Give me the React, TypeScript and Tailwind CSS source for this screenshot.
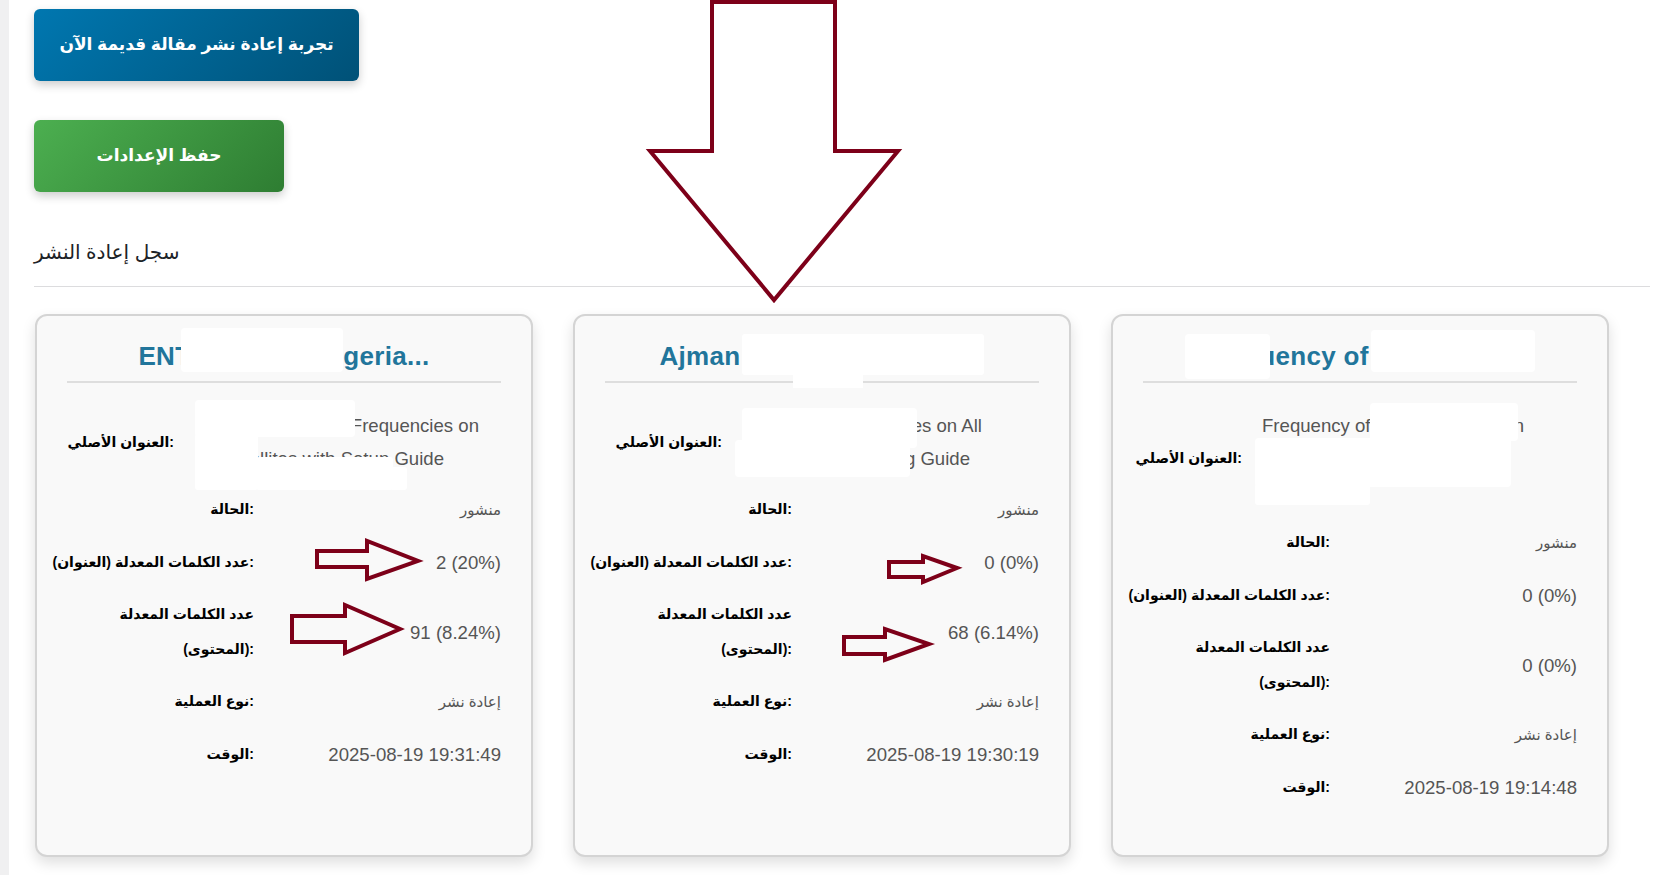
import React from "react";

type TitleLine = { box: string; justify: string; parts: string[] };

type CardData = {
  title: React.ReactNode;
  labelBox: string;
  lines: TitleLine[];
  values: string[];
};

const cards: CardData[] = [
  {
    title: (
      <>
        <span>ENT</span>
        <span className="relative -top-[6px] -ml-[10px] block h-[44px] w-[162px] shrink-0 rounded-[4px] bg-white" />
        <span>geria...</span>
      </>
    ),
    labelBox: "w-[107px]",
    lines: [
      { box: "w-[285px]", justify: "justify-end", parts: ["ENTV Algeria Frequencies on"] },
      { box: "w-[250px]", justify: "justify-end", parts: ["All Satellites with Setup Guide"] },
    ],
    values: ["منشور", "2 (20%)", "91 (8.24%)", "إعادة نشر", "2025-08-19 19:31:49"],
  },
  {
    title: (
      <>
        <span>Ajman</span>
        <span className="relative -top-[2px] ml-[2px] block h-[41px] w-[242px] shrink-0 rounded-[3px] bg-white">
          <span className="absolute left-[51px] top-[38px] block h-[16px] w-[70px] bg-white" />
        </span>
      </>
    ),
    labelBox: "w-[117px]",
    lines: [
      { box: "w-[240px]", justify: "justify-end", parts: ["Channel Frequencies on All"] },
      { box: "w-[228px]", justify: "justify-end", parts: ["Satellites with Tuning Guide"] },
    ],
    values: ["منشور", "0 (0%)", "68 (6.14%)", "إعادة نشر", "2025-08-19 19:30:19"],
  },
  {
    title: (
      <>
        <span className="relative z-10 -mr-[11px] block h-[45px] w-[85px] shrink-0 rounded-[4px] bg-white" />
        <span>uency of</span>
        <span className="relative -top-[5px] ml-[2px] block h-[42px] w-[164px] shrink-0 rounded-[4px] bg-white" />
      </>
    ),
    labelBox: "w-[99px]",
    lines: [
      { box: "w-[262px]", justify: "justify-between", parts: ["Frequency of", "n"] },
      { box: "w-[250px]", justify: "justify-start", parts: ["\u00a0"] },
      { box: "w-[250px]", justify: "justify-start", parts: ["\u00a0"] },
    ],
    values: ["منشور", "0 (0%)", "0 (0%)", "إعادة نشر", "2025-08-19 19:14:48"],
  },
];

const labels = ["الحالة:", "عدد الكلمات المعدلة (العنوان):", "CONTENT", "نوع العملية:", "الوقت:"];

function Card({ d }: { d: CardData }) {
  return (
    <div className="flex w-[498px] shrink-0 flex-col rounded-[12px] border-2 border-[#d4d4d4] bg-[#f9f9f9] px-[30px] pb-[41px] pt-[20px] shadow-[0_6px_14px_rgba(0,0,0,0.13)]">
      <div className="flex h-[47px] items-center justify-center border-b-2 border-[#dedede] pb-[5px] text-[26px] font-bold leading-[40px] tracking-[0.3px] text-[#21759b]">
        {d.title}
      </div>
      <div className="mt-[18px] flex flex-col">
        <div className="flex items-center py-[8px]">
          <div className={"flex shrink-0 justify-end whitespace-nowrap text-[14px] font-bold leading-[35px] text-black " + d.labelBox}>
            <span className="shrink-0">العنوان الأصلي:</span>
          </div>
          <div className="ml-[20px] flex flex-col text-[18.6px] leading-[33px] text-[#555]">
            {d.lines.map((l, i) => (
              <div key={i} className={"flex h-[33px] overflow-hidden whitespace-nowrap " + l.box + " " + l.justify}>
                {l.parts.map((p, j) => (
                  <span key={j} className="shrink-0">
                    {p}
                  </span>
                ))}
              </div>
            ))}
          </div>
        </div>
        {labels.map((lab, i) => {
          const v = d.values[i];
          const arabic = i === 0 || i === 3;
          return (
            <div key={i} className="flex min-h-[53px] items-center py-[8px]">
              <div className="flex w-[187px] shrink-0 flex-col items-end whitespace-nowrap text-[14px] font-bold leading-[35px] text-black">
                {lab === "CONTENT" ? (
                  <>
                    <span className="shrink-0">عدد الكلمات المعدلة</span>
                    <span className="shrink-0">(المحتوى):</span>
                  </>
                ) : (
                  <span className="shrink-0">{lab}</span>
                )}
              </div>
              <div
                className={
                  "flex-1 whitespace-nowrap text-right leading-[37px] " +
                  (arabic ? "text-[15px] text-[#555]" : "text-[18.6px] text-[#555]")
                }
              >
                {v}
              </div>
            </div>
          );
        })}
      </div>
    </div>
  );
}

const ARROW = "#7d0019";

export default function App() {
  return (
    <div className="relative flex min-h-screen w-[1662px] overflow-hidden bg-white [font-family:'Liberation_Sans','DejaVu_Sans',sans-serif]">
      <div className="w-[9px] shrink-0 bg-[#f0f0f1]" />
      <div className="flex-1 pl-[25px] pt-[9px]">
        <button className="flex h-[72px] w-[325px] items-center justify-center rounded-[6px] bg-[linear-gradient(135deg,#0077b0,#005177)] text-[17px] font-bold text-white shadow-[0_4px_10px_rgba(0,0,0,0.2)]">
          تجربة إعادة نشر مقالة قديمة الآن
        </button>
        <button className="mt-[39px] flex h-[72px] w-[250px] items-center justify-center rounded-[6px] bg-[linear-gradient(135deg,#4caf50,#2e7d32)] text-[17px] font-bold text-white shadow-[0_4px_10px_rgba(0,0,0,0.2)]">
          حفظ الإعدادات
        </button>
        <h2 className="mt-[45px] text-[20px] leading-[30px] text-[#1d2327]">سجل إعادة النشر</h2>
        <div className="mr-[12px] mt-[19px] h-px bg-[#dcdcde]" />
        <div className="mt-[27px] flex gap-[40px] pb-[30px] pl-[1px]">
          {cards.map((c, i) => (
            <Card key={i} d={c} />
          ))}
        </div>
      </div>

      <svg className="pointer-events-none absolute left-0 top-0" width="1662" height="875" viewBox="0 0 1662 875">
        <g fill="#ffffff">
          <rect x="195" y="400" width="160" height="37" rx="4" />
          <rect x="195" y="434" width="63" height="56" rx="3" />
          <rect x="256" y="457" width="137" height="33" rx="3" />
          <rect x="390" y="467" width="17" height="23" rx="3" />
          <rect x="742" y="408" width="175" height="40" rx="4" />
          <rect x="735" y="440" width="175" height="37" rx="4" />
          <rect x="1370" y="403" width="148" height="38" rx="4" />
          <rect x="1255" y="438" width="256" height="49" rx="4" />
          <rect x="1255" y="484" width="115" height="21" rx="3" />
        </g>
        <g fill="none" stroke={ARROW} strokeWidth="4" strokeLinejoin="miter">
          <path d="M712,2 L835,2 L835,151 L898,151 L774,300 L650,151 L712,151 Z" fill="#ffffff" />
          <path d="M317,551 L367,551 L367,541 L418,561 L367,579 L367,567 L317,567 Z" />
          <path d="M292,616 L345,616 L345,605 L400,629 L345,653 L345,642 L292,642 Z" />
          <path d="M889,562 L923,562 L923,556 L957,568 L923,582 L923,577 L889,577 Z" />
          <path d="M844,637 L885,637 L885,629 L929,644 L885,660 L885,654 L844,654 Z" />
        </g>
      </svg>
    </div>
  );
}
